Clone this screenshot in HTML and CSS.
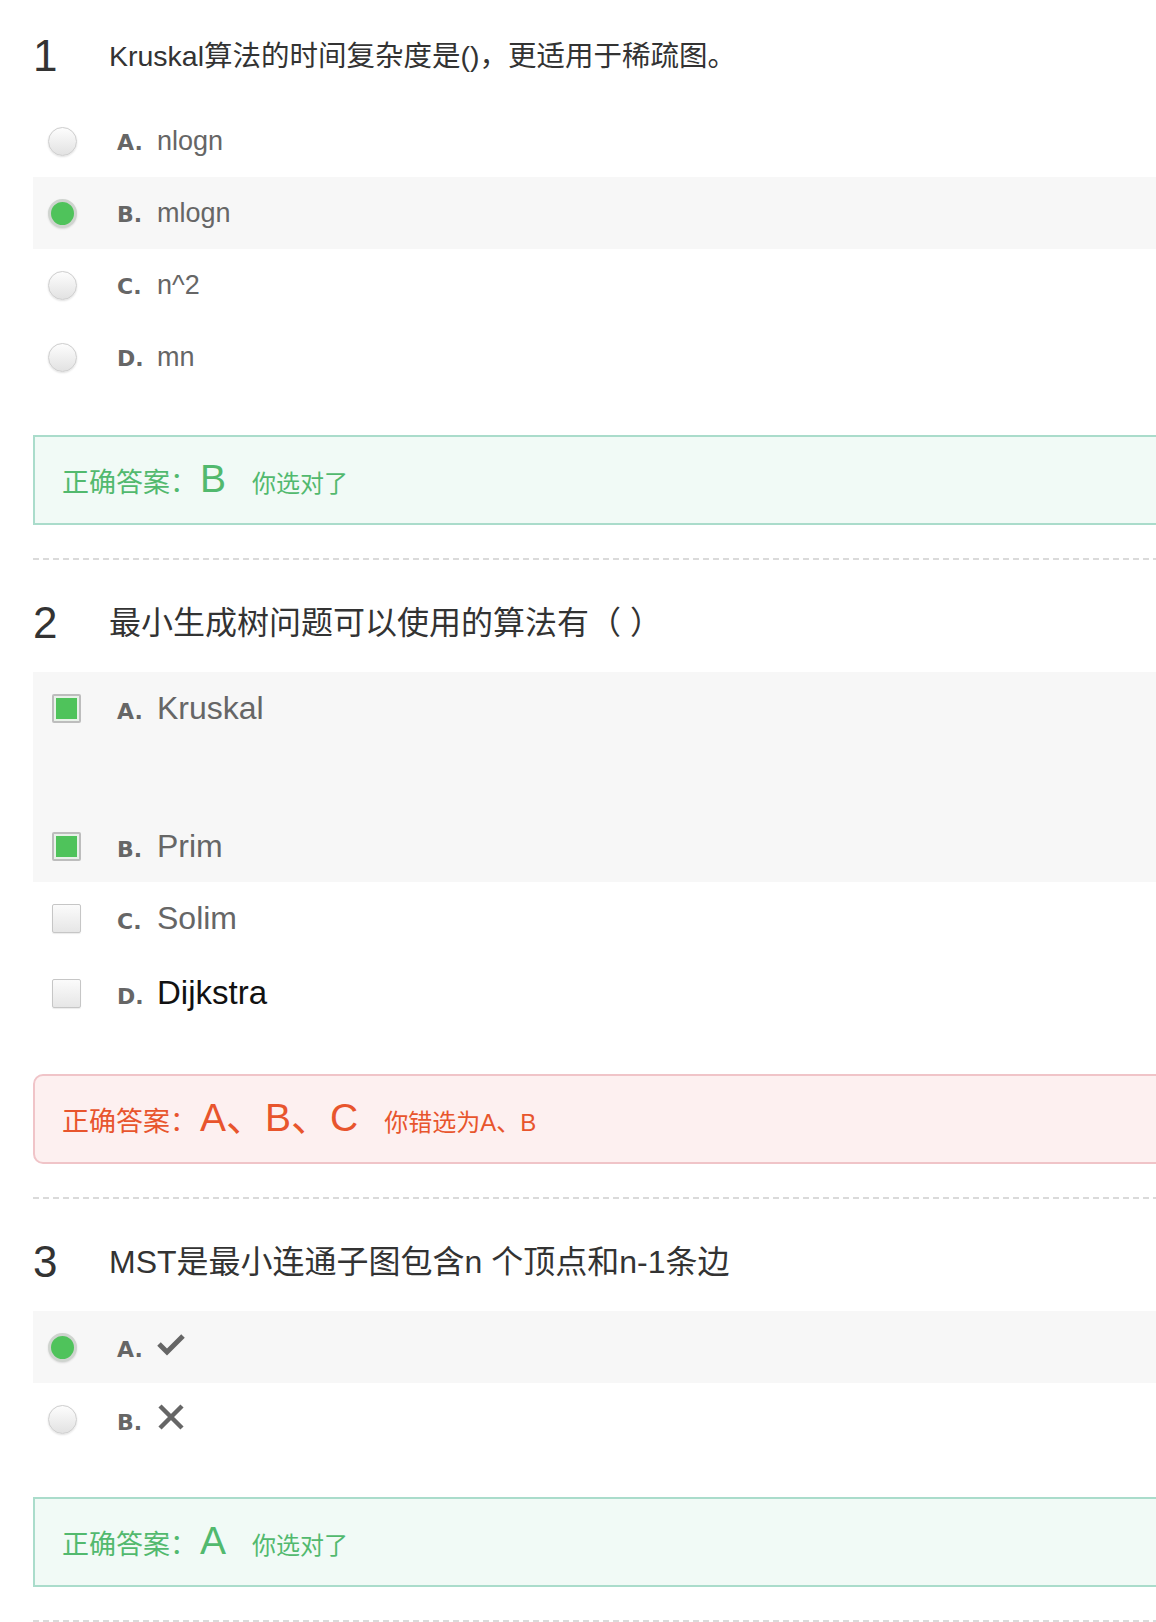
FILE: index.html
```html
<!DOCTYPE html>
<html lang="zh-CN">
<head>
<meta charset="utf-8">
<title>答题结果</title>
<link rel="stylesheet" href="styles.css">
</head>
<body>
<div class="page">
  <section class="question">
    <div class="q-head"><span class="q-num">1</span><span class="q-title">Kruskal算法的时间复杂度是()，更适用于稀疏图。</span></div>
    <div class="options">
      <div class="opt"><span class="ctrl"><span class="radio"></span></span><span class="opt-body"><span class="lbl">A.</span><span class="txt">nlogn</span></span></div>
      <div class="opt sel"><span class="ctrl"><span class="radio on"></span></span><span class="opt-body"><span class="lbl">B.</span><span class="txt">mlogn</span></span></div>
      <div class="opt"><span class="ctrl"><span class="radio"></span></span><span class="opt-body"><span class="lbl">C.</span><span class="txt">n^2</span></span></div>
      <div class="opt"><span class="ctrl"><span class="radio"></span></span><span class="opt-body"><span class="lbl">D.</span><span class="txt">mn</span></span></div>
    </div>
    <div class="answer ok"><span class="ans-key">正确答案：</span><span class="ans-val">B</span><span class="ans-note">你选对了</span></div>
  </section>
  <div class="sep"></div>

  <section class="question next">
    <div class="q-head"><span class="q-num">2</span><span class="q-title big">最小生成树问题可以使用的算法有（ ）</span></div>
    <div class="options">
      <div class="opt sel"><span class="ctrl"><span class="check on"></span></span><span class="opt-body"><span class="lbl">A.</span><span class="txt big">Kruskal</span></span></div>
      <div class="opt-blank sel"></div>
      <div class="opt sel"><span class="ctrl"><span class="check on"></span></span><span class="opt-body"><span class="lbl">B.</span><span class="txt big">Prim</span></span></div>
      <div class="opt"><span class="ctrl"><span class="check"></span></span><span class="opt-body"><span class="lbl">C.</span><span class="txt big">Solim</span></span></div>
      <div class="opt tall"><span class="ctrl"><span class="check"></span></span><span class="opt-body"><span class="lbl">D.</span><span class="txt dark">Dijkstra</span></span></div>
    </div>
    <div class="answer bad"><span class="ans-key">正确答案：</span><span class="ans-val">A、B、C</span><span class="ans-note">你错选为A、B</span></div>
  </section>
  <div class="sep"></div>

  <section class="question next">
    <div class="q-head"><span class="q-num">3</span><span class="q-title big">MST是最小连通子图包含n 个顶点和n-1条边</span></div>
    <div class="options">
      <div class="opt sel"><span class="ctrl"><span class="radio on"></span></span><span class="opt-body"><span class="lbl">A.</span><svg class="mark" width="28" height="24" viewBox="0 0 28 24" aria-label="对"><polyline points="2,11 10,19 26,3" fill="none" stroke="#666" stroke-width="5"/></svg></span></div>
      <div class="opt"><span class="ctrl"><span class="radio"></span></span><span class="opt-body"><span class="lbl">B.</span><svg class="mark" width="28" height="26" viewBox="0 0 28 26" aria-label="错"><path d="M3 2 L25 24 M25 2 L3 24" fill="none" stroke="#666" stroke-width="4.5"/></svg></span></div>
    </div>
    <div class="answer ok"><span class="ans-key">正确答案：</span><span class="ans-val">A</span><span class="ans-note">你选对了</span></div>
  </section>
  <div class="sep"></div>
</div>
</body>
</html>
```

FILE: styles.css
```css
html, body {
  margin: 0;
  padding: 0;
  overflow: hidden;
  background: #fff;
}

body {
  font-family: "Liberation Sans", "Noto Sans CJK SC", sans-serif;
  color: #333;
}

.page {
  width: 1240px;
  padding-left: 33px;
  padding-top: 23px;
}

.question.next {
  padding-top: 30px;
}

.q-head {
  display: flex;
  align-items: center;
  height: 66px;
}

.q-num {
  flex: none;
  width: 76px;
  font-size: 44px;
  line-height: 1;
  color: #333;
}

.q-title {
  font-size: 28.5px;
  line-height: 1.2;
  color: #333;
  white-space: nowrap;
}

.q-title.big {
  font-size: 32px;
}

.options {
  margin-top: 16px;
}

.opt {
  display: flex;
  align-items: center;
  height: 72px;
  padding-left: 15px;
}

.opt.tall {
  height: 78px;
}

.sel {
  background: #f7f7f7;
}

.opt-blank {
  height: 66px;
}

.ctrl {
  flex: none;
  width: 69px;
  display: flex;
  align-items: center;
}

.radio {
  box-sizing: border-box;
  width: 29px;
  height: 29px;
  border-radius: 50%;
  border: 1px solid #cdcdcd;
  background: linear-gradient(#fdfdfd, #e2e2e2);
  box-shadow: 0 1px 2px rgba(0, 0, 0, 0.12);
}

.radio.on {
  border: 3px solid #cfd4cf;
  background: #4fc35b;
}

.check {
  box-sizing: border-box;
  margin-left: 4px;
  width: 29px;
  height: 29px;
  border: 1px solid #c6c6c6;
  border-radius: 2px;
  background: linear-gradient(#fbfbfb, #e6e6e6);
  box-shadow: 0 1px 1px rgba(0, 0, 0, 0.08);
}

.check.on {
  border: 2px solid #bdbdbd;
  background: #4fc35b;
  box-shadow: inset 0 0 0 2px #e9f1e9;
}

.opt-body {
  white-space: nowrap;
}

.lbl {
  display: inline-block;
  width: 40px;
  font-family: "DejaVu Sans", sans-serif;
  font-weight: bold;
  font-size: 22px;
  color: #666;
}

.txt {
  font-size: 27px;
  color: #666;
}

.txt.big {
  font-size: 32px;
}

.txt.dark {
  font-size: 33px;
  color: #111;
}

.mark {
  vertical-align: baseline;
}

.answer {
  box-sizing: border-box;
  margin-top: 42px;
  height: 90px;
  border: 2px solid;
  display: flex;
  align-items: baseline;
  padding: 22px 0 0 27px;
  white-space: nowrap;
}

.answer.ok {
  border-color: #aadccb;
  background: #f1faf6;
  color: #52b96e;
}

.answer.bad {
  border-color: #f0c4c8;
  background: #fdf0f0;
  color: #e8552d;
  border-radius: 10px;
}

.ans-key {
  font-size: 27px;
  line-height: 1;
}

.ans-val {
  font-size: 39px;
  line-height: 1;
  margin-left: 3px;
}

.ans-note {
  font-size: 24px;
  line-height: 1;
  margin-left: 26px;
}

.sep {
  height: 2px;
  margin-top: 33px;
  background: repeating-linear-gradient(90deg, #dadada 0 6px, transparent 6px 10px);
}
```
